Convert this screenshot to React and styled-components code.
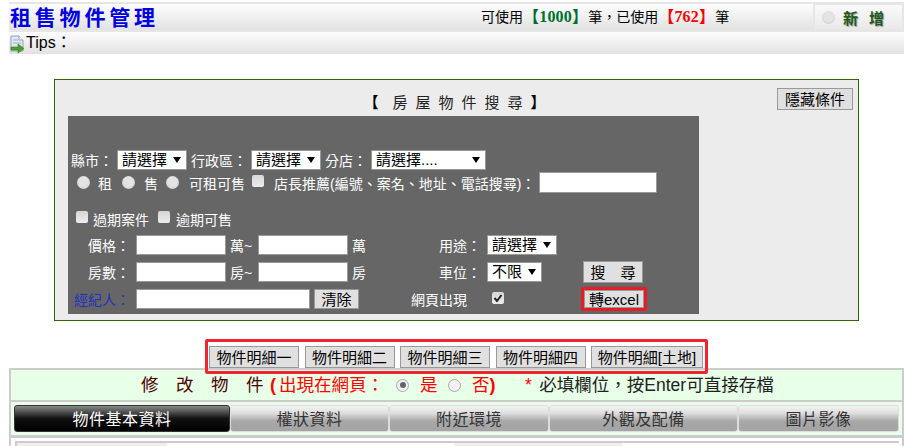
import React from "react";
import styled, { createGlobalStyle } from "styled-components";

const Global = createGlobalStyle`
  html, body { margin: 0; padding: 0; background: #fff; overflow: hidden; }
  body { font-family: "Liberation Sans", "Noto Sans CJK TC", sans-serif; font-size: 14px; color: #000; }
  * { box-sizing: border-box; }
`;
const Page = styled.div`
  width: 906px; height: 446px; padding: 2px 2px 0 9px; overflow: hidden;
`;
const barBg = "linear-gradient(#fdfdfd, #e2e2e2)";
const Header = styled.header`
  display: flex; height: 30px; border-top: 2px solid #e6e6e6; border-bottom: 2px solid #e6e6e6;
  background: ${barBg}; align-items: stretch;
`;
const Title = styled.h1`
  margin: 0; width: 472px; padding-left: 1px; font-size: 21px; font-weight: 700; line-height: 25px;
  letter-spacing: 3.8px; color: #0000e0; white-space: nowrap; font-family: "Noto Sans CJK TC", serif;
`;
const Quota = styled.div`
  flex: 1; font-size: 14px; line-height: 26px; white-space: nowrap;
`;
const Num = styled.b`
  font-family: "Liberation Serif", "Noto Sans CJK TC", serif; font-size: 16px; letter-spacing: .2px;
  color: ${p => p.$c};
`;
const AddBtn = styled.div`
  width: 91px; margin: -1px 0; border: 2px solid #e6e6e6; display: flex; align-items: center;
  padding-left: 7px; background: linear-gradient(#fafafa, #e9e9e9);
`;
const AddText = styled.span`
  margin-left: 8px; font-size: 15px; font-weight: 700; color: #1c5a1c; letter-spacing: 11px;
  white-space: nowrap; text-shadow: 1px 1px 1px #999;
`;
const Radio = styled.span`
  flex: none; display: inline-block; width: 13px; height: 13px; border-radius: 50%;
  background: radial-gradient(circle at 50% 45%, #e4e4e4 0 45%, #d2d2d2 75%, #bdbdbd 100%);
  position: relative; margin: ${p => p.$m || 0};
  ${p => p.$ring && `background: #f2f2f2; border: 1px solid #aaa;`}
  ${p => p.$on && `&::after { content: ""; position: absolute; inset: 2.5px; border-radius: 50%; background: #666; }`}
`;
const Tips = styled.div`
  height: 22px; display: flex; align-items: center; background: ${barBg};
  font-size: 16px; line-height: 22px;
`;
const Panel = styled.section`
  margin: 25px 0 0 45px; width: 805px; height: 242px; border: 1px solid #336600; background: #ececec;
`;
const PanelHead = styled.div`
  height: 36px; display: grid; grid-template-columns: 1fr auto 1fr; padding: 8px 5px 0; align-items: start;
`;
const PanelTitle = styled.h2`
  grid-column: 2; margin: 6px 0 0; padding-left: 4px; font-size: 15px; font-weight: 400; line-height: 18px; letter-spacing: 8px;
  white-space: nowrap; color: #222; b { color: #000; }
  b:first-child { margin-right: 6px; }
`;
const Btn = styled.button`
  font: 15px/1 "Liberation Sans", "Noto Sans CJK TC", sans-serif; color: #000; background: #e0e0e0;
  border: 1px solid #999; padding: 0; width: ${p => p.$w}px; height: ${p => p.$h || 22}px; flex: none; border-radius: 0;
  white-space: pre;
`;
const HideBtn = styled(Btn)`
  grid-column: 3; justify-self: end;
`;
const Dark = styled.form`
  margin-left: 13px; width: 631px; height: 198px; background: #666; color: #fff; padding-top: 34px;
  display: flex; flex-direction: column;
`;
const Row = styled.div`
  display: flex; align-items: center; height: ${p => p.$h}px; padding-left: ${p => p.$pl || 0}px;
  margin-top: ${p => p.$mt || 0}px; white-space: nowrap; font-size: 14px;
`;
const Label = styled.span` margin: 0 ${p => p.$r || 0}px 0 ${p => p.$l || 0}px; `;
const SelectWrap = styled.span`
  position: relative; display: inline-block; width: ${p => p.$w}px; height: 20px; flex: none;
  background: #fff; border: 1px solid #999; color: #000;
  &::after {
    content: ""; position: absolute; top: 6px; right: 5px; border: 4px solid transparent;
    border-top: 6px solid #000; border-bottom: 0;
  }
`;
const NativeSelect = styled.select`
  appearance: none; border: 0; background: transparent; width: 100%; height: 18px; display: block; padding: 0 0 0 4px;
  font: 15px/18px "Liberation Sans", "Noto Sans CJK TC", sans-serif; color: #000; outline: 0; border-radius: 0;
`;
const Select = ({ w, t }) => (
  <SelectWrap $w={w}>
    <NativeSelect defaultValue={t}><option>{t}</option></NativeSelect>
  </SelectWrap>
);
const CheckBox = styled.span`
  flex: none; display: inline-flex; align-items: center; justify-content: center; width: 12px; height: 12px; border-radius: 2px;
  background: linear-gradient(#d6d6d6, #ececec); margin: ${p => p.$m || 0}; justify-self: start;
`;
const Text = styled.input`
  width: ${p => p.$w}px; height: ${p => p.$h || 20}px; flex: none; border: 1px solid #999; background: #fff; padding: 0;
  margin: ${p => p.$m || 0}; border-radius: 0;
`;
const Grid = styled.div`
  display: grid; grid-template-columns: 68px 90px 32px 90px 139px 96px 1fr; grid-auto-rows: 20px; row-gap: 7px;
  align-items: center; margin-top: 5px; font-size: 14px; white-space: nowrap;
`;
const RowLabel = styled.span` justify-self: end; padding-right: 6px; color: ${p => p.$c || "#fff"}; `;
const Unit = styled.span` padding-left: 4px; `;
const UnitCell = styled.div` display: flex; justify-content: space-between; padding-right: 6px; `;
const WebLabel = styled.span` padding-left: 63px; `;
const Span3 = styled.div` grid-column: 2 / span 3; display: flex; align-items: center; gap: 4px; `;
const ExcelFrame = styled.div`
  justify-self: start; margin-left: -2px; border: 3px solid #e81c28; border-radius: 2px; display: flex;
`;
const BtnBar = styled.div`
  margin: 18px 0 -6px 196px; width: 503px; height: 35px; border: 3px solid #ee2433; border-radius: 2px;
  padding: 4px 0 0 1px; display: flex; gap: 5.5px; position: relative; z-index: 1;
`;
const Editor = styled.section`
  border: 2px solid #ccc; border-bottom: 0; background: #e8ffe8; height: 80px;
`;
const EditHead = styled.div`
  height: 32px; border-bottom: 2px solid #ccc; display: flex; align-items: center; padding-left: 130px; white-space: nowrap;
  font-size: 17.5px; line-height: 28px;
`;
const Maroon = styled.span` color: #4a0000; letter-spacing: 17.5px; margin-right: 6.5px; `;
const LastChar = styled.span` letter-spacing: 0; `;
const Red = styled.span` color: #f00; font-weight: ${p => p.$b ? 700 : 400}; margin: ${p => p.$m || 0}; font-size: ${p => p.$b ? 18 : 17.5}px; `;
const Note = styled.span` color: #222; `;
const Tabs = styled.div`
  display: flex; padding: 3px 3px 0; height: 36px; border-bottom: 3px solid #ccc;
`;
const Tab = styled.div`
  width: ${p => p.$w}px; height: 27px; flex: none; text-align: center; font-size: 16px; letter-spacing: .5px; line-height: 27px; border-radius: 3px;
  ${p => p.$on
    ? `background: linear-gradient(#8a8a8a 0, #555 22%, #111 50%, #000); color: #fff; border: 1px solid #333;`
    : `background: linear-gradient(#f4f4f4 0, #dcdcdc 30%, #a8a8a8 60%, #a4a4a4); color: #333; border: 1px solid #ddd;`}
`;
const Sheet = styled.div`
  background: #fff; height: 10px; padding: 3px 0 0 4px;
`;
const Table = styled.div`
  width: 884px; height: 10px; border: 2px solid #ccc; display: flex;
`;
const Cell = styled.div`
  width: ${p => p.$w}px; flex: none; background: ${p => p.$g ? "#eee" : "#fff"};
`;

const DocIcon = () => (
  <svg width="17" height="18" viewBox="0 0 17 18" style={{ flex: "none", marginTop: 1 }}>
    <path d="M2 1h8l4 4v11H2z" fill="#dfe8f3" stroke="#8fa3bd" />
    <path d="M10 1v4h4" fill="#fff" stroke="#8fa3bd" />
    <path d="M4 5h5M4 8h8" stroke="#9db0c8" />
    <path d="M2 12h7V9l6 4.5-6 4.5v-3H2z" fill="#4aa02c" stroke="#2f7a1c" strokeWidth=".6" />
  </svg>
);
const Tick = () => (
  <svg width="10" height="10" viewBox="0 0 10 10"><path d="M1.5 5l2.5 3 4.5-6" fill="none" stroke="#222" strokeWidth="2" /></svg>
);

export default function App() {
  return (
    <Page>
      <Global />
      <Header>
        <Title>租售物件管理</Title>
        <Quota>可使用<Num $c="#006f2e">【1000】</Num>筆，已使用<Num $c="#f00">【762】</Num>筆</Quota>
        <AddBtn><Radio /><AddText>新增</AddText></AddBtn>
      </Header>
      <Tips><DocIcon />Tips：</Tips>
      <Panel>
        <PanelHead>
          <PanelTitle><b>【</b>房屋物件搜尋<b>】</b></PanelTitle>
          <HideBtn type="button" $w={76}>隱藏條件</HideBtn>
        </PanelHead>
        <Dark>
          <Row $h={20} $pl={3}>
            <Label $r={4}>縣市：</Label><Select w={70} t="請選擇" />
            <Label $l={4} $r={4}>行政區：</Label><Select w={70} t="請選擇" />
            <Label $l={4} $r={4}>分店：</Label><Select w={115} t="請選擇...." />
          </Row>
          <Row $h={23} $mt={1} $pl={9}>
            <Radio /><Label $l={8} $r={10}>租</Label>
            <Radio /><Label $l={9} $r={8}>售</Label>
            <Radio /><Label $l={10} $r={7}>可租可售</Label>
            <CheckBox $m="-3px 0 0 0" /><Label $l={10} $r={4}>店長推薦(編號、案名、地址、電話搜尋)：</Label>
            <Text $w={118} $h={21} />
          </Row>
          <Row $h={22} $mt={14} $pl={8}>
            <CheckBox $m="-4px 0 0 0" /><Label $l={5} $r={9}>過期案件</Label>
            <CheckBox $m="-4px 0 0 0" /><Label $l={6}>逾期可售</Label>
          </Row>
          <Grid>
            <RowLabel>價格：</RowLabel><Text $w={90} /><Unit>萬~</Unit><Text $w={90} />
            <UnitCell><Unit>萬</Unit><span>用途：</span></UnitCell>
            <Select w={70} t="請選擇" /><span />
            <RowLabel>房數：</RowLabel><Text $w={90} /><Unit>房~</Unit><Text $w={90} />
            <UnitCell><Unit>房</Unit><span>車位：</span></UnitCell>
            <Select w={55} t="不限" /><Btn type="button" $w={60}>{"搜　尋"}</Btn>
            <RowLabel $c="#2233bb">經紀人：</RowLabel>
            <Span3><Text $w={174} /><Btn type="button" $w={45} $h={20}>清除</Btn></Span3>
            <WebLabel>網頁出現</WebLabel>
            <CheckBox $m="-2px 0 0 5px"><Tick /></CheckBox>
            <ExcelFrame><Btn type="button" $w={60} $h={18}>轉excel</Btn></ExcelFrame>
          </Grid>
        </Dark>
      </Panel>
      <BtnBar>
        <Btn type="button" $w={90}>物件明細一</Btn>
        <Btn type="button" $w={90}>物件明細二</Btn>
        <Btn type="button" $w={90}>物件明細三</Btn>
        <Btn type="button" $w={90}>物件明細四</Btn>
        <Btn type="button" $w={112}>物件明細[土地]</Btn>
      </BtnBar>
      <Editor>
        <EditHead>
          <Maroon>修改物<LastChar>件</LastChar></Maroon>
          <Red $b $m="0 3px 0 0">(</Red>
          <Red $m="0 12px 0 0">出現在網頁：</Red>
          <Radio $ring $on $m="0 11px 0 0" />
          <Red $m="0 10.5px 0 0">是</Red>
          <Radio $ring $m="0 11px 0 0" />
          <Red>否</Red>
          <Red $b>)</Red>
          <Red $m="0 7.5px 0 29.5px">*</Red>
          <Note>必填欄位，按Enter可直接存檔</Note>
        </EditHead>
        <Tabs>
          <Tab $on $w={216}>物件基本資料</Tab>
          <Tab $w={159}>權狀資料</Tab>
          <Tab $w={160}>附近環境</Tab>
          <Tab $w={189}>外觀及配備</Tab>
          <Tab $w={161}>圖片影像</Tab>
        </Tabs>
        <Sheet>
          <Table>
            <Cell $g $w={150} /><Cell $w={287} /><Cell $g $w={168} /><Cell $w={277} />
          </Table>
        </Sheet>
      </Editor>
    </Page>
  );
}
